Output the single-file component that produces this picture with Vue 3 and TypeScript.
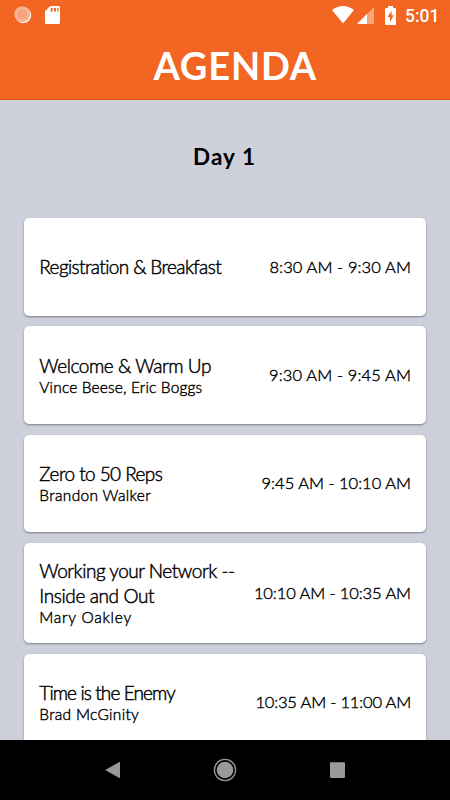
<script setup lang="ts">
interface Line {
  text: string
  spacing: number
}

interface Session {
  title: Line[]
  speakers?: Line
  time: Line
}

const sessions: Session[] = [
  {
    title: [{ text: 'Registration & Breakfast', spacing: -0.62 }],
    time: { text: '8:30 AM - 9:30 AM', spacing: 0.1 },
  },
  {
    title: [{ text: 'Welcome & Warm Up', spacing: -0.43 }],
    speakers: { text: 'Vince Beese, Eric Boggs', spacing: 0.15 },
    time: { text: '9:30 AM - 9:45 AM', spacing: 0.12 },
  },
  {
    title: [{ text: 'Zero to 50 Reps', spacing: -0.57 }],
    speakers: { text: 'Brandon Walker', spacing: 0.35 },
    time: { text: '9:45 AM - 10:10 AM', spacing: 0 },
  },
  {
    title: [
      { text: 'Working your Network --', spacing: -0.47 },
      { text: 'Inside and Out', spacing: -0.38 },
    ],
    speakers: { text: 'Mary Oakley', spacing: 0.75 },
    time: { text: '10:10 AM - 10:35 AM', spacing: -0.1 },
  },
  {
    title: [{ text: 'Time is the Enemy', spacing: -0.89 }],
    speakers: { text: 'Brad McGinity', spacing: 0.3 },
    time: { text: '10:35 AM - 11:00 AM', spacing: -0.18 },
  },
]

const ticks = Array.from({ length: 20 }, (_, i) => i * 18)
</script>

<template>
  <div class="screen">
    <header class="top">
      <div class="status">
        <svg class="sync" width="18" height="18" viewBox="0 0 18 18">
          <circle cx="9.2" cy="9.2" r="8" fill="#fff" />
          <circle cx="8.2" cy="8.2" r="8" fill="#f8a57c" />
          <line
            v-for="a in ticks"
            :key="a"
            x1="8.2"
            y1="0.6"
            x2="8.2"
            y2="2.8"
            stroke="#fbd0b8"
            stroke-width="0.8"
            :transform="`rotate(${a} 8.2 8.2)`"
          />
        </svg>
        <svg class="sd" width="15" height="18" viewBox="0 0 15 18">
          <path d="M5.3 0H13.5Q15 0 15 1.5V16.5Q15 18 13.5 18H1.5Q0 18 0 16.5V5.3Z" fill="#fff" />
          <path d="M5.7 2H7.7V5.5H5.7ZM9 2H11V5.5H9ZM12.2 2H13.6V5.5H12.2Z" fill="#f26522" />
        </svg>
        <span class="grow"></span>
        <svg class="wifi" width="22" height="18" viewBox="0 0 22 18">
          <path d="M0 4.1Q11 -4 22 4.1L11 17.6Z" fill="#fff" />
        </svg>
        <svg class="cell" width="18" height="18" viewBox="0 0 18 18">
          <path d="M17 1V18H0Z" fill="#f8a57c" />
          <path d="M10 8V18H0Z" fill="#fff" />
        </svg>
        <svg class="battery" width="11" height="19" viewBox="0 0 11 19">
          <path d="M3 0H8V2H10Q11 2 11 3V18Q11 19 10 19H1Q0 19 0 18V3Q0 2 1 2H3Z" fill="#fff" />
          <path d="M6.5 4.8 2.5 11H5V16L8.8 9.2H6.5Z" fill="#f26522" />
        </svg>
        <span class="clock">5:01</span>
      </div>
      <h1 class="heading">AGENDA</h1>
    </header>

    <main class="content">
      <h2 class="day">Day 1</h2>
      <section class="list">
        <article v-for="s in sessions" :key="s.time.text" class="card">
          <div class="info">
            <div
              v-for="line in s.title"
              :key="line.text"
              class="title"
              :style="{ letterSpacing: line.spacing + 'px' }"
            >{{ line.text }}</div>
            <div
              v-if="s.speakers"
              class="speakers"
              :style="{ letterSpacing: s.speakers.spacing + 'px' }"
            >{{ s.speakers.text }}</div>
          </div>
          <div class="time" :style="{ letterSpacing: s.time.spacing + 'px' }">{{ s.time.text }}</div>
        </article>
      </section>
    </main>

    <nav class="nav">
      <svg width="24" height="24" viewBox="0 0 24 24">
        <path d="M4.2 12 18.3 4Q19 3.8 19 4.5V19.5Q19 20.2 18.3 20Z" fill="#999" />
      </svg>
      <svg width="24" height="24" viewBox="0 0 24 24">
        <circle cx="12" cy="12" r="10.6" fill="none" stroke="#999" stroke-width="1.3" />
        <circle cx="12" cy="12" r="8.3" fill="#999" />
      </svg>
      <svg width="24" height="24" viewBox="0 0 24 24">
        <rect x="4" y="4.2" width="15" height="15.7" rx="0.8" fill="#999" />
      </svg>
    </nav>
  </div>
</template>

<style>
body {
  margin: 0;
  overflow: hidden;
}
</style>

<style scoped>
.screen {
  width: 450px;
  height: 800px;
  display: flex;
  flex-direction: column;
  overflow: hidden;
  background: #cdd0da;
  color: #000;
  font-family: Lato, 'Liberation Sans', sans-serif;
}
.top {
  flex: none;
  height: 100px;
  box-sizing: border-box;
  background: #f26522;
  border-bottom: 1px solid #ea5412;
  color: #fff;
}
.status {
  display: flex;
  align-items: center;
  height: 30px;
  padding: 0 11px 0 14px;
}
.sd {
  margin-left: 13px;
}
.grow {
  flex: 1;
}
.cell {
  margin-left: 3px;
}
.battery {
  margin-left: 10px;
}
.clock {
  width: 34px;
  margin-left: 9px;
  font: 500 17.5px/30px Roboto, sans-serif;
  white-space: nowrap;
  padding-top: 1px;
}
.heading {
  margin: 0;
  padding-left: 153.5px;
  font-size: 38px;
  line-height: 70px;
  font-weight: 700;
  letter-spacing: 0.8px;
  white-space: nowrap;
}
.content {
  flex: 1;
  min-height: 0;
  overflow: hidden;
}
.day {
  margin: 0;
  padding-left: 193px;
  height: 118px;
  font-size: 22.5px;
  line-height: 114px;
  font-weight: 700;
  letter-spacing: 1.1px;
}
.list {
  display: flex;
  flex-direction: column;
  gap: 10.8px;
  padding: 0 24px;
}
.card {
  display: flex;
  justify-content: space-between;
  align-items: center;
  flex: none;
  min-height: 97.5px;
  box-sizing: border-box;
  padding: 15px 15px 15px 15.3px;
  border-radius: 5px;
  background: #fff;
  box-shadow: 0 1px 2px rgba(40, 42, 60, 0.5);
}
.info {
  padding-bottom: 1px;
}
.title {
  font-size: 19px;
  line-height: 25px;
  font-weight: 300;
  white-space: nowrap;
  -webkit-text-stroke: 0.45px #000;
}
.speakers {
  font-size: 15.5px;
  line-height: 19px;
  font-weight: 300;
  white-space: nowrap;
  -webkit-text-stroke: 0.4px #000;
}
.time {
  font-size: 16.5px;
  line-height: 20px;
  font-weight: 300;
  white-space: nowrap;
  -webkit-text-stroke: 0.4px #000;
}
.nav {
  flex: none;
  display: flex;
  justify-content: center;
  align-items: center;
  gap: 88.5px;
  height: 60px;
  background: #000;
}
</style>
